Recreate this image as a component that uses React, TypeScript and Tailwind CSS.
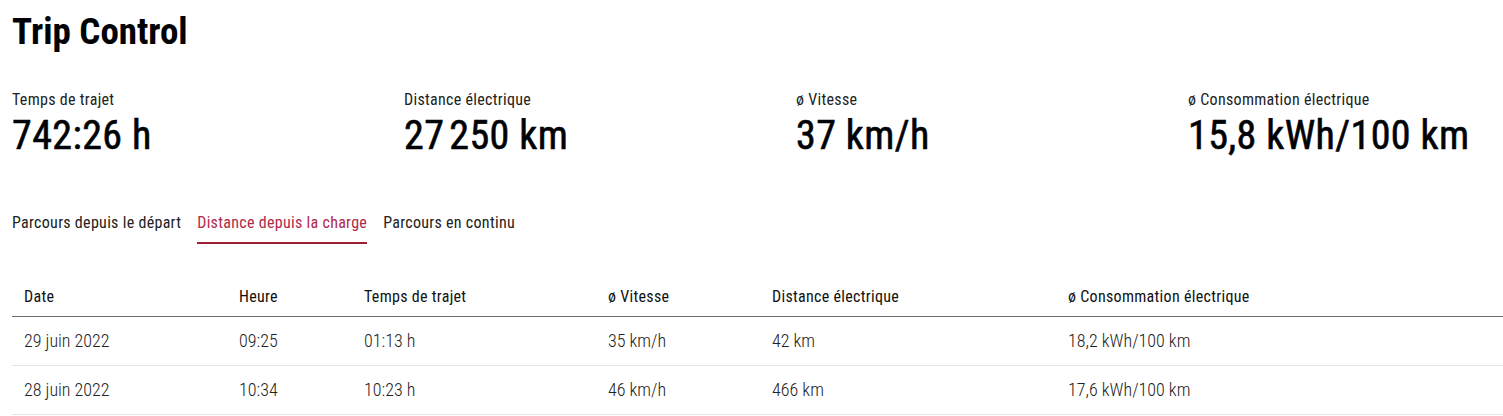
import React from "react";

const stats = [
  { label: "Temps de trajet", value: "742:26 h" },
  { label: "Distance électrique", value: "27\u202f250 km" },
  { label: "ø Vitesse", value: "37 km/h" },
  { label: "ø Consommation électrique", value: "15,8 kWh/100 km" },
];

const tabs = ["Parcours depuis le départ", "Distance depuis la charge", "Parcours en continu"];

const headers = ["Date", "Heure", "Temps de trajet", "ø Vitesse", "Distance électrique", "ø Consommation électrique"];

const rows = [
  ["29 juin 2022", "09:25", "01:13 h", "35 km/h", "42 km", "18,2 kWh/100 km"],
  ["28 juin 2022", "10:34", "10:23 h", "46 km/h", "466 km", "17,6 kWh/100 km"],
];

export default function App() {
  return (
    <div className="w-[1503px] h-[416px] overflow-hidden bg-white text-[#010205] font-['Roboto_Condensed',_'Roboto',_sans-serif]">
      <div className="pl-3 pt-[10px]">
        <h1 className="text-[37px] leading-[44px] font-bold">Trip Control</h1>

        <div className="mt-[34px] grid grid-cols-[392px_392px_392px_1fr]">
          {stats.map((s) => (
            <div key={s.label} className="flex flex-col">
              <span className="text-[16px] leading-[24px] tracking-[0.3px] text-[#222]">{s.label}</span>
              <span className="text-[40px] leading-[48px] font-normal tracking-[0.4px] [-webkit-text-stroke:0.6px_#010205]">{s.value}</span>
            </div>
          ))}
        </div>

        <div className="mt-[51px] flex gap-4">
          {tabs.map((t, i) => (
            <div
              key={t}
              className={
                i === 1
                  ? "text-[16px] leading-[24px] tracking-[0.3px] pb-[7px] border-b-2 border-[#a01d37] text-[#b0294a]"
                  : "text-[16px] leading-[24px] tracking-[0.3px] pb-[7px] border-b-2 border-transparent text-[#222]"
              }
            >
              {t}
            </div>
          ))}
        </div>

        <div className="mt-[33px]">
          <div className="grid grid-cols-[215px_125px_244px_164px_296px_1fr] border-b border-[#6b6b6b] pt-2 pb-[7px]">
            {headers.map((h) => (
              <div key={h} className="px-3 text-[16px] leading-[24px] tracking-[0.3px] text-[#111]">
                {h}
              </div>
            ))}
          </div>
          {rows.map((r) => (
            <div key={r[0]} className="grid grid-cols-[215px_125px_244px_164px_296px_1fr] border-b border-[#e3e3e3] py-3">
              {r.map((c, i) => (
                <div key={i} className="px-3 text-[18px] leading-[24px] font-light text-[#222]">
                  {c}
                </div>
              ))}
            </div>
          ))}
        </div>
      </div>
    </div>
  );
}
